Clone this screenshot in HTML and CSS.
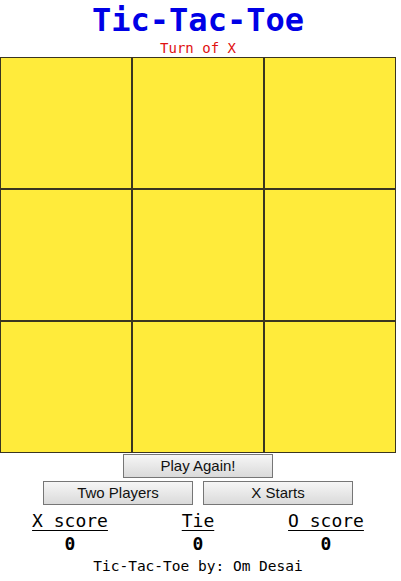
FILE: index.html
```html
<!DOCTYPE html>
<html>
<head>
<meta charset="utf-8">
<link rel="stylesheet" href="styles.css">
</head>
<body>
<div class="app">
  <h1 class="title">Tic-Tac-Toe</h1>
  <div class="turn">Turn of X</div>
  <div class="board">
    <div class="cell"></div><div class="cell"></div><div class="cell"></div>
    <div class="cell"></div><div class="cell"></div><div class="cell"></div>
    <div class="cell"></div><div class="cell"></div><div class="cell"></div>
  </div>
  <div class="row row-first">
    <button class="btn">Play Again!</button>
  </div>
  <div class="row row-second">
    <button class="btn">Two Players</button>
    <button class="btn">X Starts</button>
  </div>
  <div class="scores">
    <div class="score"><div class="label">X score</div><div class="num">0</div></div>
    <div class="score"><div class="label">Tie</div><div class="num">0</div></div>
    <div class="score"><div class="label">O score</div><div class="num">0</div></div>
  </div>
  <div class="footer">Tic-Tac-Toe by: Om Desai</div>
</div>
</body>
</html>
```
FILE: styles.css
```css
html, body {
  margin: 0;
  padding: 0;
  background: #fff;
}
.app {
  width: 396px;
  font-family: "DejaVu Sans Mono", monospace;
  text-align: center;
}
.title {
  margin: 0;
  font-size: 32px;
  line-height: 40px;
  font-weight: bold;
  color: #0000e6;
}
.turn {
  font-size: 14px;
  line-height: 17px;
  color: #e01010;
}
.board {
  display: grid;
  grid-template-columns: repeat(3, 132px);
  grid-template-rows: repeat(3, 132px);
}
.cell {
  box-sizing: border-box;
  border: 1px solid #3a3520;
  background: #ffeb3b;
}
.row {
  display: flex;
  justify-content: center;
  gap: 10px;
}
.row-first {
  margin-top: 1px;
}
.row-second {
  margin-top: 3px;
}
.btn {
  box-sizing: border-box;
  width: 150px;
  height: 24px;
  margin: 0;
  padding: 0 0 1px;
  border: 1px solid #767676;
  border-radius: 0;
  background: linear-gradient(#f6f6f6, #dadada);
  font-family: "Liberation Sans", Arial, sans-serif;
  font-size: 15px;
  color: #111;
}
.scores {
  display: flex;
  justify-content: center;
  margin-top: 5px;
}
.score {
  width: 128px;
}
.label {
  font-size: 18px;
  line-height: 22px;
  text-decoration: underline;
  text-underline-offset: 3px;
  color: #000;
}
.num {
  font-size: 18px;
  line-height: 20px;
  font-weight: bold;
  margin-top: 2px;
  color: #000;
}
.footer {
  font-size: 14.5px;
  line-height: 18px;
  margin-top: 3px;
  color: #000;
}
```
